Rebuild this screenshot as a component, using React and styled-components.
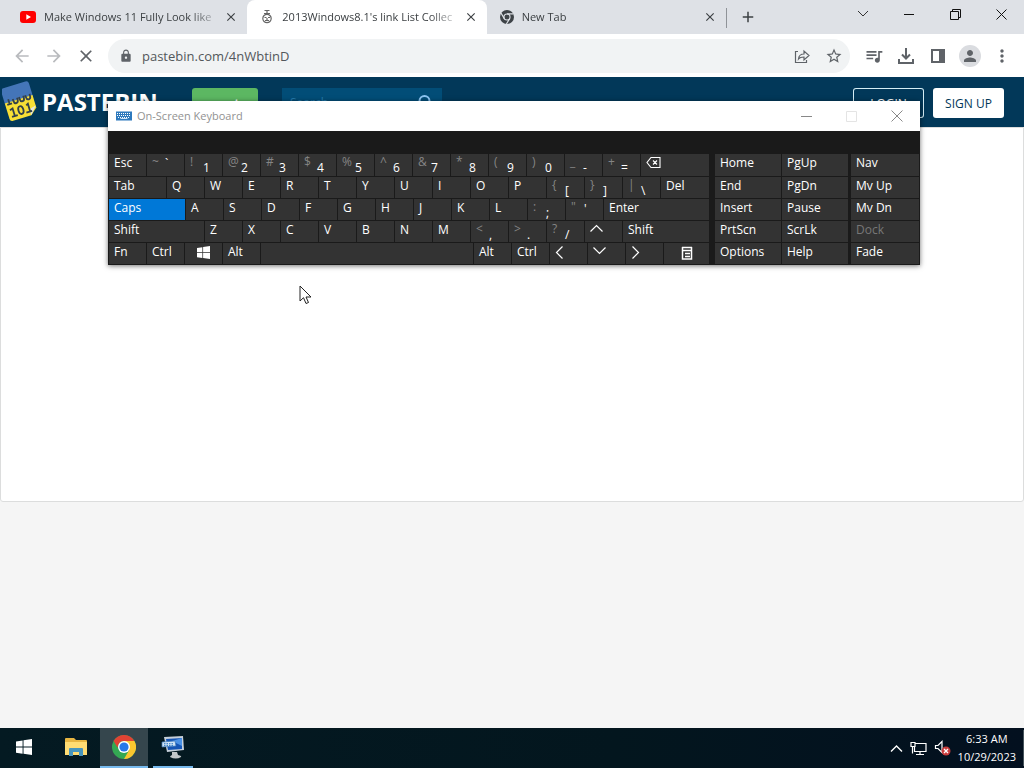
import React from 'react';
import styled, { createGlobalStyle } from 'styled-components';
import { MdArrowBack, MdArrowForward, MdClose, MdLock, MdStarBorder, MdQueueMusic, MdPerson, MdMoreVert, MdAdd } from 'react-icons/md';

const GlobalStyle = createGlobalStyle`
  *, *::before, *::after { box-sizing: border-box; }
  body { margin: 0; font-family: "Open Sans", "Noto Sans", sans-serif; font-size: 12px; }
  button, input { font: inherit; color: inherit; border: 0; padding: 0; margin: 0; background: none; }
  svg { display: block; flex: none; }
`;

const Desktop = styled.div`
  position: relative;
  display: flex;
  flex-direction: column;
  min-height: 100vh;
  overflow: hidden;
  background: #f5f5f5;
`;

/* Browser tab strip */
const TabStrip = styled.div`
  display: flex;
  align-items: stretch;
  height: 34px;
  background: #dee1e6;
  color: #3c4043;
`;
const TabList = styled.div`
  display: flex;
  flex: 0 1 727px;
  min-width: 0;
`;
const Tab = styled.div`
  display: flex;
  align-items: center;
  flex: 1 1 0;
  min-width: 0;
  gap: 7px;
  padding: 0 8px 0 ${p => (p.$first ? 20 : 12)}px;
  background: ${p => (p.$active ? '#fff' : 'transparent')};
  border-radius: 8px 8px 0 0;
  border-right: ${p => (p.$last ? '1px solid #8f9398' : '0')};
  ${p => p.$last && 'border-radius: 0; margin: 8px 0 6px; padding-bottom: 2px;'}
`;
const TabTitle = styled.span`
  flex: 1;
  min-width: 0;
  overflow: hidden;
  white-space: nowrap;
  font-size: 11px;
  line-height: 18px;
  mask-image: linear-gradient(to right, #000 85%, rgba(0, 0, 0, 0.2) 100%);
`;
const IconButton = styled.button`
  display: flex;
  align-items: center;
  justify-content: center;
  flex: none;
  width: ${p => p.$w || 16}px;
  height: ${p => p.$h || 16}px;
  border-radius: ${p => (p.$round ? '50%' : '0')};
  background: ${p => p.$bg || 'transparent'};
  color: ${p => p.$color || '#5f6368'};
`;
const ProfileButton = styled(IconButton)`
  margin: 0 5px;
`;
const WindowControls = styled.div`
  display: flex;
  margin-left: auto;
  color: #111;
`;

/* Browser toolbar */
const Toolbar = styled.div`
  display: flex;
  align-items: center;
  height: 43px;
  padding: 0 6px;
  background: #fff;
`;
const Omnibox = styled.label`
  display: flex;
  align-items: center;
  flex: 1;
  min-width: 0;
  height: 34px;
  margin: 0 8px 0 6px;
  padding: 0 0 0 11px;
  border-radius: 17px;
  background: #f1f3f4;
  color: #5f6368;
`;
const AddressInput = styled.input`
  flex: 1;
  min-width: 0;
  margin-left: 9px;
  font-size: 13px;
  line-height: 20px;
  color: #53575b;
  outline: 0;
`;

/* Web page */
const SiteHeader = styled.header`
  display: flex;
  align-items: flex-start;
  height: 50px;
  padding: 0 20px 0 2px;
  background: #023859;
`;
const Brand = styled.a`
  display: flex;
  align-items: center;
  gap: 4px;
  width: 190px;
  height: 50px;
  color: #fff;
  font-size: 24px;
  font-weight: 700;
  line-height: 30px;
  text-decoration: none;
`;
const HeaderButton = styled.button`
  height: 30px;
  margin-top: 11px;
  line-height: 32px;
  border-radius: 3px;
  text-align: center;
  font-size: 12px;
  font-weight: ${p => (p.$kind === 'paste' ? 700 : 400)};
  width: ${p => (p.$kind === 'paste' ? 66 : 71)}px;
  color: ${p => (p.$kind === 'signup' ? '#023859' : '#fff')};
  background: ${p => ({ paste: '#5cb762', signup: '#fff', login: 'transparent' }[p.$kind])};
  box-shadow: ${p => (p.$kind === 'login' ? 'inset 0 0 0 1px #d5edf5' : 'none')};
`;
const SearchBox = styled.label`
  display: flex;
  align-items: center;
  width: 160px;
  height: 30px;
  margin: 11px 0 0 24px;
  padding: 0 9px 0 8px;
  background: #024d77;
  color: #8cc4f2;
`;
const SearchInput = styled.input`
  flex: 1;
  min-width: 0;
  font-size: 12px;
  line-height: 18px;
  &::placeholder { color: #2278a8; opacity: 1; }
`;
const AuthGroup = styled.div`
  display: flex;
  gap: 9px;
  margin-left: auto;
`;
const Page = styled.main`
  min-height: 375px;
  background: #fff;
  border: 1px solid #dcdddd;
  border-radius: 0 0 3px 3px;
`;

/* On-screen keyboard */
const KeyboardWindow = styled.section`
  position: absolute;
  top: 101px;
  left: 108px;
  width: 812px;
  background: #1a1a1a;
  color: #fff;
  box-shadow: 0 1px 5px rgba(0, 0, 0, 0.55);
`;
const TitleBar = styled.div`
  display: flex;
  align-items: center;
  height: 30px;
  padding-left: 8px;
  gap: 5px;
  background: #fff;
  color: #929292;
  font-size: 11px;
  line-height: 18px;
`;
const KeyArea = styled.div`
  display: flex;
  padding: 23px 1px 1px;
`;
const Cluster = styled.div`
  display: flex;
  flex-direction: column;
  gap: 1px;
  flex: ${p => (p.$w ? `0 0 ${p.$w}px` : '1')};
  margin-left: ${p => p.$gap || 0}px;
`;
const KeyRow = styled.div`
  display: flex;
  gap: 1px;
  height: 21px;
  &:first-child { height: 22px; }
`;
const Key = styled.button`
  display: flex;
  align-items: flex-start;
  justify-content: ${p => (p.$center ? 'center' : 'flex-start')};
  flex: ${p => (p.$grow ? '1 1 0' : `0 0 ${p.$w || 37}px`)};
  min-width: 0;
  padding: 0 5px;
  background: ${p => (p.$on ? '#0078d7' : '#333')};
  color: ${p => (p.disabled ? '#777' : '#fff')};
  font-size: 12px;
  line-height: 18px;
  white-space: nowrap;
`;
const Upper = styled.span`
  width: 13px;
  flex: none;
  text-align: left;
  line-height: 16px;
  color: #858585;
`;
const Lower = styled.span`
  padding-top: ${p => (p.$high ? 1 : 5)}px;
  line-height: 18px;
`;
const KeyIcon = styled.span`
  padding-top: ${p => p.$top || 2}px;
`;

/* Taskbar */
const Taskbar = styled.footer`
  display: flex;
  align-items: stretch;
  height: 40px;
  margin-top: auto;
  color: #fff;
  background: linear-gradient(to right, #041a22, #03161e 60%, #03101f);
`;
const TaskButton = styled.button`
  display: flex;
  align-items: center;
  justify-content: center;
  width: ${p => (p.$running && !p.$active ? 40 : 48)}px;
  margin: 0 ${p => (p.$running && !p.$active ? 5 : 0)}px 0 ${p => (p.$running && !p.$active ? 5 : p.$lead || 0)}px;
  background: ${p => (p.$active ? '#35464d' : 'transparent')};
  border-bottom: ${p => (p.$running ? '2px solid #76b9ed' : '2px solid transparent')};
`;
const Tray = styled.div`
  display: flex;
  align-items: center;
  gap: 7px;
  margin-left: auto;
`;
const Clock = styled.time`
  padding-right: 7px;
  border-right: 1px solid #47555c;
  font-size: 11px;
  line-height: 18px;
  text-align: center;
`;

const Cursor = styled.svg`
  position: absolute;
  top: 285px;
  left: 299px;
`;

const Line = ({ d, w = 16, h = 16, s = 1, ...rest }) => (
  <svg width={w} height={h} viewBox={`0 0 ${w} ${h}`} fill="none" stroke="currentColor" strokeWidth={s} {...rest}>
    <path d={d} />
  </svg>
);

const YouTubeIcon = () => (
  <svg width="17" height="16" viewBox="0 0 17 16">
    <rect x="0" y="2" width="16" height="12" rx="3" fill="#f00" />
    <path d="M6.3 5.2v5.6L11 8z" fill="#fff" />
  </svg>
);
const RobotIcon = () => (
  <svg width="16" height="16" viewBox="0 0 16 16" fill="none" stroke="#666" strokeWidth="1.2">
    <path d="M5.5 1.5h5M8 1.5v3M5 4.5h6" />
    <circle cx="8" cy="9.5" r="4.2" />
    <path d="M5.5 8.5h2M9 8.5h2M6 11.5h4M8 9v2" />
  </svg>
);
const ChromeMono = () => (
  <svg width="16" height="16" viewBox="0 0 16 16">
    <circle cx="8" cy="8" r="7" fill="#3e4347" />
    <circle cx="8" cy="8" r="3.6" fill="#dee1e6" />
    <circle cx="8" cy="8" r="2.5" fill="#3e4347" />
    <path d="M8 4.9h6.5M5.3 9.6L2 4M10.7 9.6L7.4 15" stroke="#dee1e6" strokeWidth="1.2" />
  </svg>
);
const ChromeIcon = () => (
  <svg width="24" height="24" viewBox="0 0 24 24">
    <circle cx="12" cy="12" r="12" fill="#34a853" />
    <path d="M12 6h10.4A12 12 0 0 1 12 24l5.2-9z" fill="#fbc62f" />
    <path d="M1.6 6A12 12 0 0 1 22.4 6H12a6 6 0 0 0-5.7 4.2L5.5 12.6z" fill="#e04334" />
    <circle cx="12" cy="12" r="6" fill="#fff" />
    <circle cx="12" cy="12" r="4.6" fill="#2678e8" />
  </svg>
);
const WindowsIcon = ({ size }) => (
  <svg width={size} height={size} viewBox="0 0 16 16" fill="#fff">
    <path d="M0 2.4L6.6 1.4v6.2H0zM7.5 1.3L16 0v7.6H7.5zM0 8.5h6.6v6.2L0 13.7zM7.5 8.5H16V16l-8.5-1.3z" />
  </svg>
);
const FolderIcon = () => (
  <svg width="22" height="18" viewBox="0 0 22 18">
    <path d="M0 1q0-1 1-1h8l2 2h10q1 0 1 1v13H0z" fill="#e8b642" />
    <path d="M0 4h22v13H0z" fill="#ffdc73" />
    <path d="M4 18v-7q0-1 1-1h12q1 0 1 1v7h-4v-4H8v4z" fill="#4795bd" />
  </svg>
);
const ComputerIcon = () => (
  <svg width="24" height="24" viewBox="0 0 24 24">
    <path d="M3 2l19-1 1 14-17 2z" fill="#c5cfda" />
    <path d="M5 4l16-1v11L7 15z" fill="#1555b5" />
    <path d="M11 6l10-3v8z" fill="#4a91e5" />
    <path d="M1 7l13-1 1 5-14 1z" fill="#cfe3f5" stroke="#3a76b8" strokeWidth=".7" />
    <path d="M3 8.7h10M3 10.4h10" stroke="#2e79c5" strokeDasharray="1.5 1" />
    <path d="M11 17h5l1 3q4 1 3 2-5 3-11 0 0-1 2-2z" fill="#c2c6c9" />
  </svg>
);
const PastebinLogo = () => (
  <svg width="36" height="42" viewBox="0 0 36 42">
    <g transform="rotate(-17 18 21)">
      <rect x="3" y="3" width="29" height="18" rx="3" fill="#4475b8" />
      <path d="M3 18h29v13l-7 6H6q-3 0-3-3z" fill="#f8df35" />
      <path d="M25 37v-5q0-2 2-2l5-1z" fill="#e4e6dc" />
      <g fill="none" stroke="#33414a" strokeWidth="1.8">
        <path d="M5 20h5M7.5 15v5M12 16v2q0 3 2.2 3t2.2-3v-2M18.500 16v2q0 3 2.200 3t2.200-3v-2M25 16v2q0 3 2.200 3t2.200-3v-2" />
        <path d="M6 26l3-1v8M6 33h6M23 26l2-1v8M21 33h6" />
        <ellipse cx="16.500" cy="29" rx="2.500" ry="4" />
      </g>
    </g>
  </svg>
);
const KeyboardIcon = () => (
  <svg width="16" height="10" viewBox="0 0 16 10">
    <rect width="16" height="9" y="0.5" fill="#2d79bd" />
    <path d="M1 2.500h14M1 4.500h14" stroke="#fff" strokeDasharray="1 1" />
    <path d="M2 6.500h12" stroke="#fff" strokeDasharray="1 1" />
    <path d="M4.500 7.500h7" stroke="#cfe3f5" />
  </svg>
);
const Backspace = () => (
  <Line w={15} h={13} s={1.1} d="M5 1.5h9v10H5L1 6.5zM7 4.500l4 4M11 4.500l-4 4" />
);
const MenuGlyph = () => (
  <Line w={12} h={14} s={1.5} d="M1.5 1v12h9V1M1 1.5h10M1 4.5h10M4 7.5h5M4 10.5h5" />
);

const dual = (upper, lower, high) => ({ upper, lower, high });
const letters = s => s.split('').map(label => ({ label }));

const mainRows = [
  [{ label: 'Esc' }, dual('~', '`', true), dual('!', '1'), dual('@', '2'), dual('#', '3'), dual('$', '4'), dual('%', '5'),
    dual('^', '6'), dual('&', '7'), dual('*', '8'), dual('(', '9'), dual(')', '0'), dual('_', '-'), dual('+', '='),
    { name: 'Backspace', icon: <Backspace />, grow: true }],
  [{ label: 'Tab', w: 57 }, ...letters('QWERTYUIOP'), dual('{', '['), dual('}', ']'), dual('|', '\\'), { label: 'Del', grow: true }],
  [{ label: 'Caps', w: 76, on: true }, ...letters('ASDFGHJKL'), dual(':', ';'), dual('"', "'", true), { label: 'Enter', grow: true }],
  [{ label: 'Shift', w: 95 }, ...letters('ZXCVBNM'), dual('<', ','), dual('>', '.'), dual('?', '/'),
    { name: 'Up', icon: <Line w={13} h={9} s={1.2} d="M.5 7.5l6-6 6 6" />, top: 3 }, { label: 'Shift', grow: true }],
  [{ label: 'Fn' }, { label: 'Ctrl' }, { name: 'Windows', icon: <WindowsIcon size={13} />, top: 3, center: true }, { label: 'Alt' },
    { name: 'Space', grow: true }, { label: 'Alt' }, { label: 'Ctrl' },
    { name: 'Left', icon: <Line w={9} h={13} s={1.2} d="M7.5 .5l-6 6 6 6" />, top: 3 },
    { name: 'Down', icon: <Line w={13} h={9} s={1.2} d="M.5 1.5l6 6 6-6" />, top: 3 },
    { name: 'Right', icon: <Line w={9} h={13} s={1.2} d="M1.5 .5l6 6-6 6" />, top: 3 },
    { name: 'Menu', icon: <MenuGlyph />, w: 45, top: 3, center: true }],
];
const navRows = [['Home', 'PgUp'], ['End', 'PgDn'], ['Insert', 'Pause'], ['PrtScn', 'ScrLk'], ['Options', 'Help']];
const modeKeys = ['Nav', 'Mv Up', 'Mv Dn', 'Dock', 'Fade'];

const KeyCap = ({ k }) => (
  <Key type="button" aria-label={k.name} $w={k.w} $grow={k.grow} $on={k.on} $center={k.center}>
    {k.label}
    {k.upper && <Upper>{k.upper}</Upper>}
    {k.lower && <Lower $high={k.high}>{k.lower}</Lower>}
    {k.icon && <KeyIcon $top={k.top}>{k.icon}</KeyIcon>}
  </Key>
);

const Keyboard = () => (
  <KeyboardWindow>
    <TitleBar>
      <KeyboardIcon />
      On-Screen Keyboard
      <WindowControls>
        <IconButton $w={45} $h={30} $color="#888" aria-label="Minimize keyboard"><Line w={11} h={11} d="M0 5.5h11" /></IconButton>
        <IconButton $w={45} $h={30} $color="#e4e4e4" aria-label="Maximize keyboard"><Line w={11} h={11} d="M.5 .5h10v10H.5z" /></IconButton>
        <IconButton $w={46} $h={30} $color="#888" aria-label="Close keyboard"><Line w={12} h={12} d="M.5 .5l11 11M11.5 .5l-11 11" /></IconButton>
      </WindowControls>
    </TitleBar>
    <KeyArea>
      <Cluster>
        {mainRows.map((row, i) => (
          <KeyRow key={i}>{row.map((k, j) => <KeyCap key={j} k={k} />)}</KeyRow>
        ))}
      </Cluster>
      <Cluster $w={133} $gap={6}>
        {navRows.map(row => (
          <KeyRow key={row[0]}>{row.map(label => <KeyCap key={label} k={{ label, grow: true }} />)}</KeyRow>
        ))}
      </Cluster>
      <Cluster $w={68} $gap={3}>
        {modeKeys.map(label => (
          <KeyRow key={label}><Key type="button" $grow disabled={label === 'Dock'}>{label}</Key></KeyRow>
        ))}
      </Cluster>
    </KeyArea>
  </KeyboardWindow>
);

export default function App() {
  return (
    <Desktop>
      <GlobalStyle />
      <TabStrip>
        <TabList>
          <Tab $first>
            <YouTubeIcon />
            <TabTitle>Make Windows 11 Fully Look like</TabTitle>
            <IconButton aria-label="Close tab" $color="#3c4043"><MdClose size={14} /></IconButton>
          </Tab>
          <Tab $active>
            <RobotIcon />
            <TabTitle>2013Windows8.1's link List Collec</TabTitle>
            <IconButton aria-label="Close tab" $color="#3c4043"><MdClose size={14} /></IconButton>
          </Tab>
          <Tab $last>
            <ChromeMono />
            <TabTitle>New Tab</TabTitle>
            <IconButton aria-label="Close tab" $color="#3c4043"><MdClose size={14} /></IconButton>
          </Tab>
        </TabList>
        <IconButton $w={42} $h={34} $color="#3c4043" aria-label="New tab"><MdAdd size={18} /></IconButton>
        <WindowControls>
          <IconButton $w={46} $h={28} $color="#333" aria-label="Search tabs"><Line w={12} h={8} d="M1 1l5 5 5-5" /></IconButton>
          <IconButton $w={46} $h={28} $color="#111" aria-label="Minimize"><Line w={10} h={10} d="M0 5.5h10" /></IconButton>
          <IconButton $w={46} $h={28} $color="#111" aria-label="Restore"><Line w={11} h={11} d="M.5 2.5h8v8h-8zM2.5 2.5v-2h8v8h-2" /></IconButton>
          <IconButton $w={46} $h={28} $color="#111" aria-label="Close"><Line w={11} h={11} d="M.5 .5l10 10M10.5 .5l-10 10" /></IconButton>
        </WindowControls>
      </TabStrip>
      <Toolbar>
        <IconButton $w={32} $h={32} $color="#b9bbbe" aria-label="Back"><MdArrowBack size={20} /></IconButton>
        <IconButton $w={32} $h={32} $color="#b9bbbe" aria-label="Forward"><MdArrowForward size={20} /></IconButton>
        <IconButton $w={32} $h={32} aria-label="Stop loading"><MdClose size={20} /></IconButton>
        <Omnibox>
          <MdLock size={14} />
          <AddressInput aria-label="Address" defaultValue="pastebin.com/4nWbtinD" />
          <IconButton $w={32} $h={32} aria-label="Share">
            <Line s={1.2} d="M4 3.5H1.5v11h11V12M4.500 11q.5-5 5.5-5V3l5 4.500-5 4.500V9q-4 0-5.500 2z" />
          </IconButton>
          <IconButton $w={32} $h={32} $round aria-label="Bookmark"><MdStarBorder size={18} /></IconButton>
        </Omnibox>
        <IconButton $w={32} $h={32} aria-label="Media"><MdQueueMusic size={20} /></IconButton>
        <IconButton $w={32} $h={32} aria-label="Downloads"><Line s={2} d="M8 0v10M4 6.5l4 4 4-4M1 11v4h14v-4" /></IconButton>
        <IconButton $w={32} $h={32} aria-label="Side panel">
          <svg width="14" height="14" viewBox="0 0 14 14"><path d="M0 0h14v14H0zM2 2v10h6V2z" fill="currentColor" fillRule="evenodd" /></svg>
        </IconButton>
        <ProfileButton $w={22} $h={22} $round $bg="#dadce0" aria-label="Profile"><MdPerson size={18} /></ProfileButton>
        <IconButton $w={32} $h={32} aria-label="More"><MdMoreVert size={20} /></IconButton>
      </Toolbar>
      <SiteHeader>
        <Brand href="#"><PastebinLogo />PASTEBIN</Brand>
        <HeaderButton $kind="paste">+ paste</HeaderButton>
        <SearchBox>
          <SearchInput aria-label="Search" placeholder="Search..." />
          <Line w={18} h={18} s={2} d="M14.5 7a5 5 0 1 1-10 0a5 5 0 0 1 10 0M6 11l-4 4" />
        </SearchBox>
        <AuthGroup>
          <HeaderButton $kind="login">LOGIN</HeaderButton>
          <HeaderButton $kind="signup">SIGN UP</HeaderButton>
        </AuthGroup>
      </SiteHeader>
      <Page />
      <Keyboard />
      <Cursor width="13" height="20" viewBox="0 0 13 20">
        <path d="M1 1v15l3.5-3.3L7 18.5l2.5-1L7 12h5z" fill="#fff" stroke="#222" />
      </Cursor>
      <Taskbar>
        <TaskButton aria-label="Start"><WindowsIcon size={16} /></TaskButton>
        <TaskButton $lead={4} aria-label="File Explorer"><FolderIcon /></TaskButton>
        <TaskButton $running $active aria-label="Chrome"><ChromeIcon /></TaskButton>
        <TaskButton $running aria-label="On-Screen Keyboard"><ComputerIcon /></TaskButton>
        <Tray>
          <Line w={13} h={9} s={1.4} d="M1 7.5l5.5-5.5 5.5 5.5" />
          <Line w={17} h={16} s={1.2} d="M5 3.5h11v8H4.5V7M1 2.5h4v4H1zM2.5 6.5v7M10 11.5v3M6 14.5h8" />
          <svg width="17" height="16" viewBox="0 0 17 16">
            <path d="M1.5 5.5h2.5l4-4v11l-4-4H1.5z" fill="none" stroke="#fff" strokeWidth="1.2" />
            <circle cx="12" cy="11" r="4.5" fill="#c93c3c" />
            <path d="M10 9l4 4M14 9l-4 4" stroke="#fff" strokeWidth="1.3" />
          </svg>
          <Clock>6:33 AM<br />10/29/2023</Clock>
        </Tray>
      </Taskbar>
    </Desktop>
  );
}
